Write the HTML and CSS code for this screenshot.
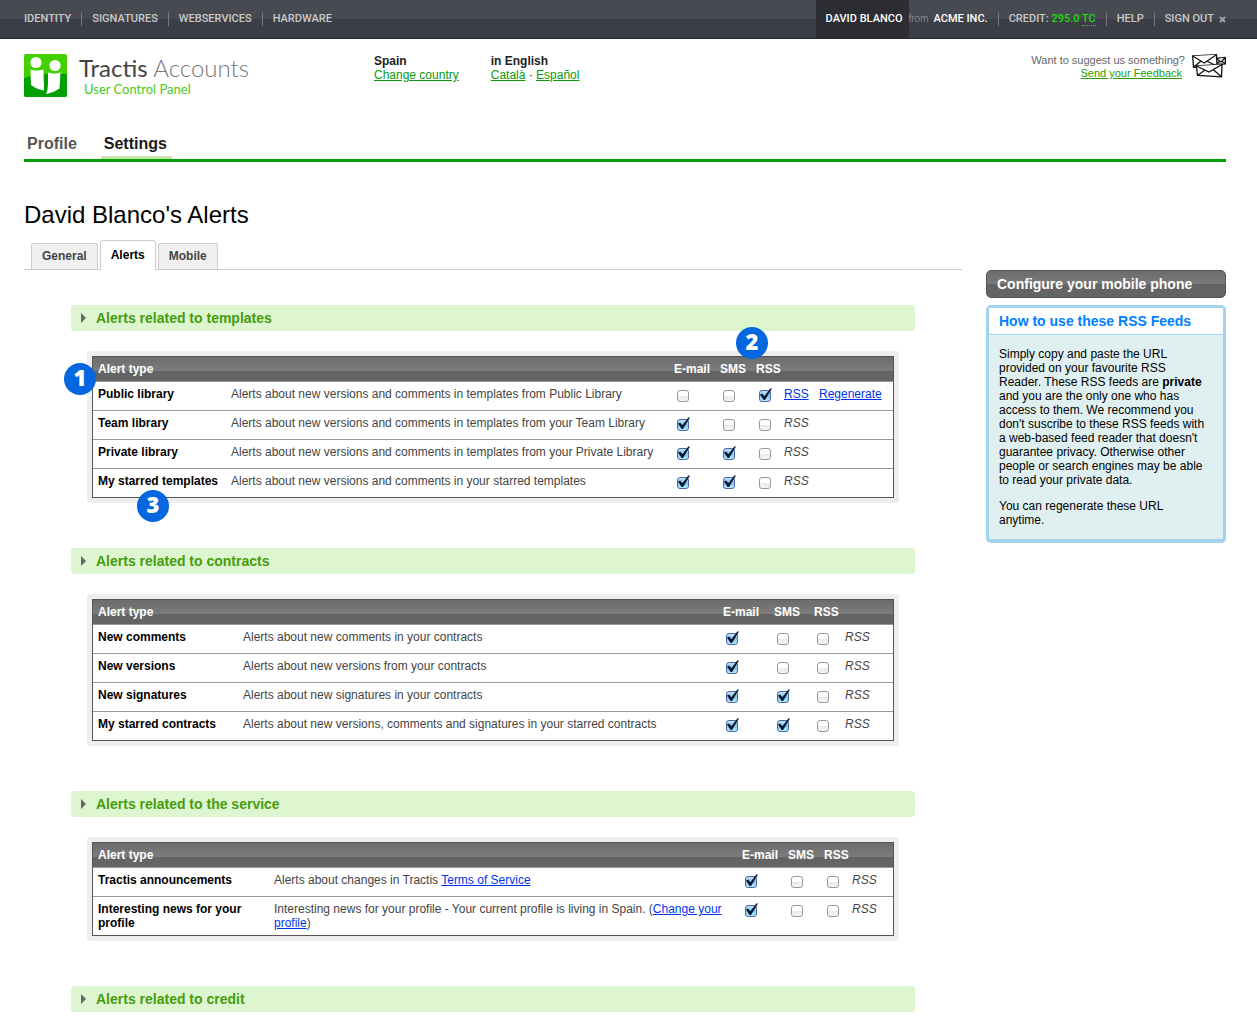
FILE: index.html
```html
<!DOCTYPE html>
<html lang="en">
<head>
<meta charset="utf-8">
<meta name="viewport" content="width=device-width, initial-scale=1">
<title>Tractis Accounts - Alerts</title>
<link rel="stylesheet" href="styles.css">
</head>
<body>
<div class="topbar">
  <nav class="topnav" aria-label="Services">
    <a href="#">IDENTITY</a>
    <a href="#">SIGNATURES</a>
    <a href="#">WEBSERVICES</a>
    <a href="#">HARDWARE</a>
  </nav>
  <div class="account">
    <a class="user" href="#">DAVID BLANCO</a>
    <span class="org"><span class="from">from</span><a href="#">ACME INC.</a></span>
    <span class="credit">CREDIT: <b>295.0 <abbr>TC</abbr></b></span>
    <a class="item" href="#">HELP</a>
    <a class="item signout" href="#">SIGN OUT
      <svg width="7" height="7" viewBox="0 0 7 7" aria-hidden="true"><path d="M1 1l5 5M6 1L1 6" stroke="#a0a1a3" stroke-width="2"/></svg>
    </a>
  </div>
</div>

<div class="page">
  <header class="header">
    <a class="brand" href="#">
      <svg width="43" height="43" viewBox="0 0 43 43" aria-hidden="true">
        <rect width="43" height="43" rx="2" fill="#43d000"/>
        <path d="M0 24Q21 18 43 20V41a2 2 0 0 1-2 2H2a2 2 0 0 1-2-2z" fill="#00a000"/>
        <circle cx="12" cy="8.500" r="5.600" fill="#fff"/>
        <circle cx="31" cy="11.500" r="5.600" fill="#fff"/>
        <path d="M6.500 15.500Q12 17.500 19.500 15.500L20 36.500Q12 35 7 31z" fill="#fff"/>
        <path d="M24 18.500Q30 20.500 36.500 18.500L35.500 34.500Q30 38.500 22 40Q24 36 24 30z" fill="#fff"/>
      </svg>
      <span class="brand-text">
        <span class="brand-name"><b>Tractis</b> Accounts</span>
        <span class="brand-sub">User Control Panel</span>
      </span>
    </a>
    <div class="locale">
      <div class="country"><strong>Spain</strong><a href="#">Change country</a></div>
      <div><strong>in English</strong><span><a href="#">Català</a> · <a href="#">Español</a></span></div>
    </div>
    <div class="feedback">
      <p>Want to suggest us something?<a href="#">Send your Feedback</a></p>
      <svg width="34" height="24" viewBox="0 0 34 24" fill="#fff" stroke="#111" stroke-width="1.3" aria-hidden="true">
        <path d="M24 4.500L33.300 3.500V10L25 10.500z"/>
        <path d="M25 5l4 3 4-4M25 10l3-3M33 9.500l-3-2"/>
        <path d="M.7 2L24.500.8 25 12 1.500 13.300z"/>
        <path d="M.7 2l11.500 7L24.500.8M1.500 13.300L9 7M25 12L15.500 7.500"/>
        <path d="M4.500 12L30 10.500 29.500 22.800 5.500 21.500z"/>
        <path d="M4.500 12l12.500 6L30 10.500M5.500 21.500L13 16M29.500 22.800L21 15.500"/>
      </svg>
    </div>
  </header>

  <nav class="mainnav" aria-label="Main">
    <a href="#">Profile</a>
    <a class="current" href="#">Settings</a>
  </nav>

  <h1>David Blanco's Alerts</h1>

  <div class="columns">
    <main>
      <nav class="tabs" aria-label="Settings sections">
        <a href="#">General</a>
        <a class="active" href="#">Alerts</a>
        <a href="#">Mobile</a>
      </nav>

      <section>
        <h2>Alerts related to templates</h2>
        <div class="panel">
          <table class="templates">
            <colgroup><col class="c-type"><col><col class="c-mail"><col class="c-sms"><col class="c-rss"><col class="c-feed"><col class="c-regen"></colgroup>
            <thead><tr><th colspan="2">Alert type</th><th>E-mail</th><th>SMS</th><th>RSS</th><th colspan="2"></th></tr></thead>
            <tbody>
              <tr><th scope="row">Public library</th><td>Alerts about new versions and comments in templates from Public Library</td><td><input type="checkbox" aria-label="Public library by e-mail"></td><td><input type="checkbox" aria-label="Public library by SMS"></td><td><input type="checkbox" aria-label="Public library by RSS" checked></td><td><a href="#">RSS</a></td><td><a href="#">Regenerate</a></td></tr>
              <tr><th scope="row">Team library</th><td>Alerts about new versions and comments in templates from your Team Library</td><td><input type="checkbox" aria-label="Team library by e-mail" checked></td><td><input type="checkbox" aria-label="Team library by SMS"></td><td><input type="checkbox" aria-label="Team library by RSS"></td><td><em>RSS</em></td><td></td></tr>
              <tr><th scope="row">Private library</th><td>Alerts about new versions and comments in templates from your Private Library</td><td><input type="checkbox" aria-label="Private library by e-mail" checked></td><td><input type="checkbox" aria-label="Private library by SMS" checked></td><td><input type="checkbox" aria-label="Private library by RSS"></td><td><em>RSS</em></td><td></td></tr>
              <tr><th scope="row">My starred templates</th><td>Alerts about new versions and comments in your starred templates</td><td><input type="checkbox" aria-label="Starred templates by e-mail" checked></td><td><input type="checkbox" aria-label="Starred templates by SMS" checked></td><td><input type="checkbox" aria-label="Starred templates by RSS"></td><td><em>RSS</em></td><td></td></tr>
            </tbody>
          </table>
          <span class="badge badge-one">1</span>
          <span class="badge badge-two">2</span>
          <span class="badge badge-three">3</span>
        </div>
      </section>

      <section>
        <h2>Alerts related to contracts</h2>
        <div class="panel">
          <table class="contracts">
            <colgroup><col class="c-type"><col><col class="c-mail"><col class="c-sms"><col class="c-rss"><col class="c-feed"></colgroup>
            <thead><tr><th colspan="2">Alert type</th><th>E-mail</th><th>SMS</th><th>RSS</th><th></th></tr></thead>
            <tbody>
              <tr><th scope="row">New comments</th><td>Alerts about new comments in your contracts</td><td><input type="checkbox" aria-label="New comments by e-mail" checked></td><td><input type="checkbox" aria-label="New comments by SMS"></td><td><input type="checkbox" aria-label="New comments by RSS"></td><td><em>RSS</em></td></tr>
              <tr><th scope="row">New versions</th><td>Alerts about new versions from your contracts</td><td><input type="checkbox" aria-label="New versions by e-mail" checked></td><td><input type="checkbox" aria-label="New versions by SMS"></td><td><input type="checkbox" aria-label="New versions by RSS"></td><td><em>RSS</em></td></tr>
              <tr><th scope="row">New signatures</th><td>Alerts about new signatures in your contracts</td><td><input type="checkbox" aria-label="New signatures by e-mail" checked></td><td><input type="checkbox" aria-label="New signatures by SMS" checked></td><td><input type="checkbox" aria-label="New signatures by RSS"></td><td><em>RSS</em></td></tr>
              <tr><th scope="row">My starred contracts</th><td>Alerts about new versions, comments and signatures in your starred contracts</td><td><input type="checkbox" aria-label="Starred contracts by e-mail" checked></td><td><input type="checkbox" aria-label="Starred contracts by SMS" checked></td><td><input type="checkbox" aria-label="Starred contracts by RSS"></td><td><em>RSS</em></td></tr>
            </tbody>
          </table>
        </div>
      </section>

      <section>
        <h2>Alerts related to the service</h2>
        <div class="panel">
          <table class="service">
            <colgroup><col class="c-type"><col><col class="c-mail"><col class="c-sms"><col class="c-rss"><col class="c-feed"></colgroup>
            <thead><tr><th colspan="2">Alert type</th><th>E-mail</th><th>SMS</th><th>RSS</th><th></th></tr></thead>
            <tbody>
              <tr><th scope="row">Tractis announcements</th><td>Alerts about changes in Tractis <a href="#">Terms of Service</a></td><td><input type="checkbox" aria-label="Announcements by e-mail" checked></td><td><input type="checkbox" aria-label="Announcements by SMS"></td><td><input type="checkbox" aria-label="Announcements by RSS"></td><td><em>RSS</em></td></tr>
              <tr><th scope="row">Interesting news for your profile</th><td>Interesting news for your profile - Your current profile is living in Spain. (<a href="#">Change your profile</a>)</td><td><input type="checkbox" aria-label="Profile news by e-mail" checked></td><td><input type="checkbox" aria-label="Profile news by SMS"></td><td><input type="checkbox" aria-label="Profile news by RSS"></td><td><em>RSS</em></td></tr>
            </tbody>
          </table>
        </div>
      </section>

      <section>
        <h2>Alerts related to credit</h2>
      </section>
    </main>

    <aside>
      <button type="button" class="configure">Configure your mobile phone</button>
      <div class="help">
        <h3>How to use these RSS Feeds</h3>
        <div class="help-body">
          <p>Simply copy and paste the URL provided on your favourite RSS Reader. These RSS feeds are <strong>private</strong> and you are the only one who has access to them. We recommend you don't suscribe to these RSS feeds with a web-based feed reader that doesn't guarantee privacy. Otherwise other people or search engines may be able to read your private data.</p>
          <p>You can regenerate these URL anytime.</p>
        </div>
      </div>
    </aside>
  </div>
</div>
</body>
</html>
```
FILE: styles.css
```css
* { box-sizing: border-box; }

body {
  margin: 0;
  background: #fff;
  color: #000;
  font: 12px/14px "Liberation Sans", Arial, sans-serif;
}

h1, h2, h3, p { margin: 0; }

/* Top bar */
.topbar {
  display: flex;
  justify-content: space-between;
  height: 39px;
  padding: 0 31px 0 24px;
  background: linear-gradient(#484a52 0 19px, #3b3e47 19px);
  border-bottom: 1px solid #2a2b33;
  font: 500 11px/38px Roboto, "Liberation Sans", sans-serif;
  color: #c8c8c8;
  white-space: nowrap;
}
.topbar a { color: inherit; text-decoration: none; }
.topnav, .account { display: flex; align-items: center; }
.topnav a, .credit, .account .item { display: block; line-height: 14px; }
.topnav a + a, .credit, .account .item {
  margin-left: 10px;
  padding-left: 10px;
  border-left: 1px solid #777980;
}
.account .user { padding: 0 6px 0 10px; background: #2b2d32; color: #fff; }
.org { color: #fff; }
.from { margin-right: 5px; color: #85868a; font-family: "Liberation Sans", Arial, sans-serif; font-size: 10px; font-weight: normal; }
.credit b { color: #1fdc0c; font-weight: 500; }
.credit abbr { border-bottom: 1px dotted #1fdc0c; }
.account .signout { display: flex; align-items: center; gap: 5px; }

/* Header */
.page { padding: 15px 31px 12px 24px; }
.header { display: flex; align-items: flex-start; height: 78px; }
.brand { display: flex; gap: 12px; width: 350px; text-decoration: none; }
.brand-text { display: flex; flex-direction: column; white-space: nowrap; }
.brand-name { font: 24px/27px Lato, sans-serif; color: #777; font-weight: 300; }
.brand-name b { color: #444; font-weight: 400; }
.brand-sub { padding-left: 5px; font: 13px/16px Lato, sans-serif; color: #4ac918; }
.locale { display: flex; gap: 32px; color: #222; }
.locale div { display: flex; flex-direction: column; }
.locale a { color: #0a9a0a; }
.feedback { display: flex; gap: 7px; margin-left: auto; font-size: 11px; line-height: 13px; color: #666; text-align: right; }
.feedback a { display: block; margin-right: 3px; color: #2a9a00; }

.mainnav {
  display: flex;
  gap: 21px;
  border-bottom: 3px solid #00a000;
  font-size: 16px;
  font-weight: bold;
  line-height: 24px;
}
.mainnav a { padding: 0 3px; border-bottom: 3px solid transparent; color: #555; text-decoration: none; }
.mainnav .current { padding-right: 5px; border-color: #c5e8a8; color: #1a1a1a; }

h1 { margin-top: 39px; font-size: 24px; font-weight: normal; line-height: 28px; }

/* Columns */
.columns { display: flex; gap: 24px; margin-top: 11px; }
main { flex: 1; }
aside { width: 240px; margin-top: 30px; }

.tabs { display: flex; align-items: flex-end; gap: 2px; padding-left: 7px; border-bottom: 1px solid #ccc; margin-bottom: 35px; }
.tabs a {
  padding: 0 10px;
  border: 1px solid #ccc;
  border-bottom: 0;
  border-radius: 3px 3px 0 0;
  background: #f0f0f0;
  color: #444;
  font-weight: bold;
  line-height: 25px;
  text-decoration: none;
}
.tabs .active { margin-bottom: -1px; padding-bottom: 1px; background: #fff; color: #000; line-height: 28px; }

section { margin: 0 47px 45px; }
section:last-child { margin-bottom: 0; }
h2 {
  display: flex;
  align-items: center;
  gap: 10px;
  padding-left: 10px;
  border-radius: 3px;
  background: #def6d0;
  color: #469c0c;
  font-size: 14px;
  line-height: 26px;
}
h2::before {
  content: "";
  border-left: 5px solid #666;
  border-top: 5px solid transparent;
  border-bottom: 5px solid transparent;
}

.panel { position: relative; margin: 20px 16px 0; padding: 5px; border-radius: 3px; background: #eee; }
table { width: 100%; table-layout: fixed; border: 1px solid #555; border-spacing: 0; background: #fff; color: #444; }
th, td { height: 29px; padding: 5px 0 5px 5px; border-bottom: 1px solid #999; text-align: left; vertical-align: top; }
tbody tr:last-child > * { height: 28px; border-bottom: 0; }
tbody th { padding-right: 5px; color: #000; }
thead th {
  height: 25px;
  background: linear-gradient(#6c6c6c, #7c7c7c 14px, #646464 14px);
  color: #fff;
}
td a { color: #0033ee; }
.c-type { width: 133px; }
.c-mail { width: 46px; }
.c-sms { width: 36px; }
.c-rss { width: 28px; }
.c-feed { width: 35px; }
.c-regen { width: 79px; }
.contracts .c-type { width: 145px; }
.contracts .c-mail { width: 51px; }
.contracts .c-sms { width: 40px; }
.contracts .c-rss { width: 31px; }
.contracts .c-feed { width: 53px; }
.service .c-type { width: 176px; }
.service .c-feed { width: 46px; }

input[type="checkbox"] {
  display: block;
  position: relative;
  appearance: none;
  width: 12px;
  height: 12px;
  margin: 3px;
  border: 1px solid #999;
  border-radius: 3px;
  background: linear-gradient(#fff 50%, #e9e9e9 50%, #f6f6f6);
}
input[type="checkbox"]:checked { border-color: #4a68a8; background: linear-gradient(#c4e0f6, #84c4f0 50%, #b4ecff); }
input[type="checkbox"]:checked::after {
  content: "";
  position: absolute;
  left: 0;
  top: -3px;
  width: 12px;
  height: 12px;
  background: #06182e;
  clip-path: polygon(0 54%, 18% 46%, 36% 68%, 86% 4%, 100% 4%, 42% 100%, 30% 100%);
}

.badge {
  position: absolute;
  width: 32px;
  height: 32px;
  border-radius: 50%;
  background: #0467e0;
  color: #fff;
  font: 800 22px/29px "Open Sans", sans-serif;
  text-align: center;
}
.badge-one { left: -23px; top: 12px; }
.badge-two { right: 131px; top: -24px; }
.badge-three { left: 50px; top: 139px; }

/* Sidebar */
.configure {
  display: block;
  width: 100%;
  height: 28px;
  padding: 0 10px;
  border: 1px solid #555;
  border-radius: 5px;
  background: linear-gradient(#6c6c6c, #7a7a7a 13px, #646464 13px);
  color: #fff;
  font: bold 14px/26px "Liberation Sans", Arial, sans-serif;
  text-align: left;
}
.help { margin-top: 7px; border: 3px solid #a2d3ec; border-bottom-width: 4px; border-radius: 5px; background: #e0f0f0; }
h3 { padding: 0 10px; border-bottom: 1px solid #a2d3ec; background: #fff; color: #0080ff; font-size: 14px; line-height: 26px; }
.help-body { display: flex; flex-direction: column; gap: 12px; padding: 12px 16px 12px 10px; }
```
